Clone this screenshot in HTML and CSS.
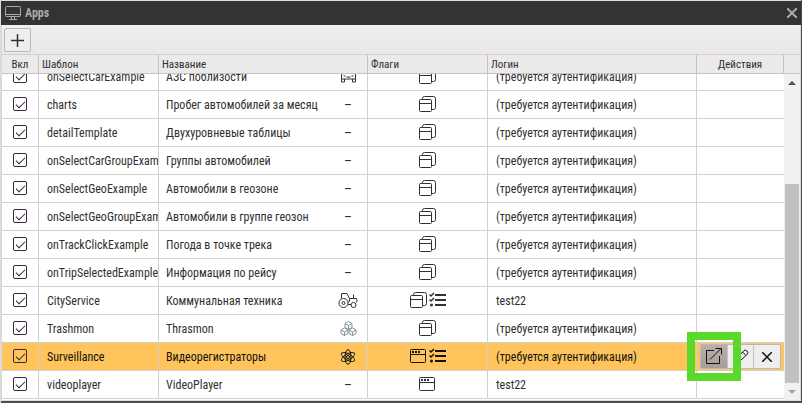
FILE: index.html
```html
<!DOCTYPE html>
<html lang="ru">
<head>
<meta charset="utf-8">
<title>Apps</title>
<link rel="stylesheet" href="styles.css">
</head>
<body>
<svg class="sprite" aria-hidden="true">
  <symbol id="i-windows" viewBox="0 0 17 17"><path d="M3.500 3.500V2.500Q3.500.5 5.500.5h9Q16.500.5 16.500 2.500v9q0 2-2 2H13M1.500 3.500h10q1 0 1 1v10q0 1-1 1h-10q-1 0-1-1v-10q0-1 1-1zM.5 7.500h12"/></symbol>
  <symbol id="i-window" viewBox="0 0 17 17"><path d="M1.500 1.500h13q1 0 1 1v11q0 1-1 1h-13q-1 0-1-1v-11q0-1 1-1zM.5 6.500h15"/><path d="M2 4h2M5 4h2M8 4h2" stroke-width="2"/></symbol>
  <symbol id="i-list" viewBox="0 0 17 17"><path stroke-width="2" d="M6 3h11M6 8h11M6 13h11"/><path stroke-width="1.500" d="M.5 2.500L2 4l3-3M.5 7.500L2 9l3-3"/><circle cx="2.500" cy="13" r="1.500" fill="currentColor" stroke="none"/></symbol>
  <symbol id="i-car" viewBox="0 0 17 16"><path d="M0 4.500h2.500L4.500.5h8l2 4H17M2.500 4.500h12l1 2v4h-14v-4zM1.500 10.500v3h3v-3M12.500 10.500v3h3v-3M3.500 7.500h2M11.500 7.500h2M6.500 8.500h4"/></symbol>
  <symbol id="i-tractor" viewBox="0 0 20 17"><circle cx="5.500" cy="11" r="4.500"/><circle cx="5.500" cy="11" r="1.500"/><circle cx="15.500" cy="13" r="2.500"/><path d="M3.500 6.500v-5h5.500l2.500 5h7q1 2 0 4M11.500 6.500v3l-1.500 1M10 12.500h3M15.500 6.500v-4"/></symbol>
  <symbol id="i-cubes" viewBox="0 0 17 15"><path d="M8.500.5l3.500 2v4l-3.500 2-3.500-2v-4zM5 2.500l3.500 2 3.500-2M8.500 4.500v4M4.500 7L8 9v3.500l-3.500 2-3.500-2V9zM1 9l3.500 2L8 9M4.500 11v3.500M12.500 7L16 9v3.500l-3.500 2-3.500-2V9zM9 9l3.500 2L16 9M12.500 11v3.500"/></symbol>
  <symbol id="i-atom" viewBox="0 0 16 16"><ellipse cx="8" cy="8" rx="3" ry="7.300"/><ellipse cx="8" cy="8" rx="3" ry="7.300" transform="rotate(60 8 8)"/><ellipse cx="8" cy="8" rx="3" ry="7.300" transform="rotate(-60 8 8)"/><circle cx="8" cy="8" r="1.500"/></symbol>
</svg>
<main class="window">
  <header class="titlebar">
    <svg class="monitor" viewBox="0 0 16 14" aria-hidden="true"><path d="M1.500.5h13q1 0 1 1v8q0 1-1 1h-13q-1 0-1-1v-8q0-1 1-1zM.5 8.500h15M6.500 10.500v2.500M9.500 10.500v2.500M4 13.500h8"/></svg>
    <h1>Apps</h1>
    <button class="close" aria-label="Закрыть"><svg viewBox="0 0 10 10"><path d="M0 0l10 10M10 0L0 10"/></svg></button>
  </header>
  <div class="content">
    <div class="toolbar"><button class="add" aria-label="Добавить"><svg viewBox="0 0 13 13"><path d="M6.500 0v13M0 6.500h13"/></svg></button></div>
    <table class="grid head">
      <colgroup><col class="c-on"><col class="c-tpl"><col><col class="c-flags"><col><col class="c-act"><col class="c-bar"></colgroup>
      <thead><tr><th class="mid">Вкл</th><th>Шаблон</th><th>Название</th><th>Флаги</th><th>Логин</th><th class="mid">Действия</th><th></th></tr></thead>
    </table>
    <div class="body">
      <div class="rows">
        <table class="grid">
          <colgroup><col class="c-on"><col class="c-tpl"><col><col class="c-flags"><col><col class="c-act"></colgroup>
          <tbody>
            <tr><td class="mid"><input type="checkbox" checked aria-label="onSelectCarExample"></td><td>onSelectCarExample</td><td class="icons"><div class="name"><span>АЗС поблизости</span><span class="kind"><svg class="i17"><use href="#i-car"/></svg></span></div></td><td class="icons"><div class="flags"><svg class="i17"><use href="#i-windows"/></svg></div></td><td>(требуется аутентификация)</td><td></td></tr>
            <tr><td class="mid"><input type="checkbox" checked aria-label="charts"></td><td>charts</td><td class="icons"><div class="name"><span>Пробег автомобилей за месяц</span><span class="kind">–</span></div></td><td class="icons"><div class="flags"><svg class="i17"><use href="#i-windows"/></svg></div></td><td>(требуется аутентификация)</td><td></td></tr>
            <tr><td class="mid"><input type="checkbox" checked aria-label="detailTemplate"></td><td>detailTemplate</td><td class="icons"><div class="name"><span>Двухуровневые таблицы</span><span class="kind">–</span></div></td><td class="icons"><div class="flags"><svg class="i17"><use href="#i-windows"/></svg></div></td><td>(требуется аутентификация)</td><td></td></tr>
            <tr><td class="mid"><input type="checkbox" checked aria-label="onSelectCarGroupExample"></td><td>onSelectCarGroupExample</td><td class="icons"><div class="name"><span>Группы автомобилей</span><span class="kind">–</span></div></td><td class="icons"><div class="flags"><svg class="i17"><use href="#i-windows"/></svg></div></td><td>(требуется аутентификация)</td><td></td></tr>
            <tr><td class="mid"><input type="checkbox" checked aria-label="onSelectGeoExample"></td><td>onSelectGeoExample</td><td class="icons"><div class="name"><span>Автомобили в геозоне</span><span class="kind">–</span></div></td><td class="icons"><div class="flags"><svg class="i17"><use href="#i-windows"/></svg></div></td><td>(требуется аутентификация)</td><td></td></tr>
            <tr><td class="mid"><input type="checkbox" checked aria-label="onSelectGeoGroupExample"></td><td>onSelectGeoGroupExample</td><td class="icons"><div class="name"><span>Автомобили в группе геозон</span><span class="kind">–</span></div></td><td class="icons"><div class="flags"><svg class="i17"><use href="#i-windows"/></svg></div></td><td>(требуется аутентификация)</td><td></td></tr>
            <tr><td class="mid"><input type="checkbox" checked aria-label="onTrackClickExample"></td><td>onTrackClickExample</td><td class="icons"><div class="name"><span>Погода в точке трека</span><span class="kind">–</span></div></td><td class="icons"><div class="flags"><svg class="i17"><use href="#i-windows"/></svg></div></td><td>(требуется аутентификация)</td><td></td></tr>
            <tr><td class="mid"><input type="checkbox" checked aria-label="onTripSelectedExample"></td><td>onTripSelectedExample</td><td class="icons"><div class="name"><span>Информация по рейсу</span><span class="kind">–</span></div></td><td class="icons"><div class="flags"><svg class="i17"><use href="#i-windows"/></svg></div></td><td>(требуется аутентификация)</td><td></td></tr>
            <tr><td class="mid"><input type="checkbox" checked aria-label="CityService"></td><td>CityService</td><td class="icons"><div class="name"><span>Коммунальная техника</span><span class="kind"><svg class="i20"><use href="#i-tractor"/></svg></span></div></td><td class="icons"><div class="flags"><svg class="i17"><use href="#i-windows"/></svg><svg class="i17"><use href="#i-list"/></svg></div></td><td>test22</td><td></td></tr>
            <tr><td class="mid"><input type="checkbox" checked aria-label="Trashmon"></td><td>Trashmon</td><td class="icons"><div class="name"><span>Thrasmon</span><span class="kind pale"><svg class="i17"><use href="#i-cubes"/></svg></span></div></td><td class="icons"><div class="flags"><svg class="i17"><use href="#i-windows"/></svg></div></td><td>(требуется аутентификация)</td><td></td></tr>
            <tr class="selected"><td class="mid"><input type="checkbox" checked aria-label="Surveillance"></td><td>Surveillance</td><td class="icons"><div class="name"><span>Видеорегистраторы</span><span class="kind"><svg class="i16"><use href="#i-atom"/></svg></span></div></td><td class="icons"><div class="flags"><svg class="i17"><use href="#i-window"/></svg><svg class="i17"><use href="#i-list"/></svg></div></td><td>(требуется аутентификация)</td>
              <td class="actions"><div class="group">
                <button class="open" aria-label="Открыть"><svg class="i17" viewBox="0 0 17 17"><path d="M9 2.500H1.500v13h13V8M5 11.500L16 .5M10.500.5H16.500V6.500"/></svg></button>
                <button aria-label="Изменить"><svg class="i16" viewBox="0 0 16 16"><path d="M1.500 14.500l1-4 8.500-9q1.500-1 3 .5t.5 3l-9 8.500zM9.500 3l3.500 3.500"/><path d="M.5 15.500l1-3.500 2.500 2.500z" fill="#f5c518" stroke="none"/></svg></button>
                <button aria-label="Удалить"><svg class="i10" viewBox="0 0 10 10"><path d="M0 0l10 10M10 0L0 10" stroke-width="1.500"/></svg></button>
                <span class="marker"></span>
              </div></td></tr>
            <tr><td class="mid"><input type="checkbox" checked aria-label="videoplayer"></td><td>videoplayer</td><td class="icons"><div class="name"><span>VideoPlayer</span><span class="kind">–</span></div></td><td class="icons"><div class="flags"><svg class="i17"><use href="#i-window"/></svg></div></td><td>test22</td><td></td></tr>
          </tbody>
        </table>
      </div>
      <div class="scrollbar" aria-hidden="true"><i class="up"></i><i class="track"><i class="thumb"></i></i><i class="down"></i></div>
    </div>
  </div>
</main>
</body>
</html>
```
FILE: styles.css
```css
* { box-sizing: border-box; }
body {
  display: flex;
  height: 100vh;
  margin: 0;
  padding: 1px 1px 2px;
  background: linear-gradient(90deg, #dcdcdc 50%, #4a4849 50%);
  color: #303030;
  font: 12px/16px "Roboto Condensed", "Liberation Sans Narrow", Roboto, sans-serif;
  overflow: hidden;
}
button { padding: 0; font: inherit; color: inherit; }
svg { display: block; flex: none; fill: none; stroke: currentColor; }
.sprite { position: absolute; width: 0; height: 0; }
.i10 { width: 10px; height: 10px; }
.i16 { width: 16px; height: 16px; }
.i17 { width: 17px; height: 17px; }
.i20 { width: 20px; height: 17px; }

.window { display: flex; flex: 1; flex-direction: column; min-width: 0; box-shadow: 0 2px 0 #4f4d4e, 0 -1px 0 #dcdcdc; }
.titlebar { display: flex; flex: none; align-items: center; gap: 4px; height: 24px; padding: 0 4px; background: #333; color: #aaa; }
.titlebar h1 { flex: 1; margin: 0; font-size: 12px; font-weight: 700; }
.monitor { width: 16px; height: 14px; }
.close { display: flex; border: 0; background: none; }
.close svg { width: 10px; height: 10px; stroke-width: 2; }

.content { display: flex; flex: 1; flex-direction: column; min-height: 0; border: solid #d8d8d8; border-width: 0 1px 1px; background: #fff; }
.toolbar { flex: none; height: 30px; padding: 3px 2px; border-bottom: 1px solid #d0d0d0; background: linear-gradient(#f0eeef, #e9e7e8); }
.add { display: grid; place-items: center; width: 27px; height: 24px; border: 1px solid #b8b8b8; border-radius: 2px; background: #efedee; }
.add svg { width: 13px; height: 13px; stroke-width: 1.500; }

.grid { width: 100%; table-layout: fixed; border-collapse: separate; border-spacing: 0; }
.c-on { width: 37px; }
.c-tpl, .c-flags { width: 120px; }
.c-act { width: 87px; }
.c-bar { width: 16px; }
th { height: 19px; padding: 1px 3px 0; border: solid #c4c4c4; border-width: 0 1px 1px 0; background: #ebe9ea; text-align: left; font-size: 11px; font-weight: 400; }
th:last-child { border-right: 0; }
td { height: 28px; padding: 1px 0 0 8px; border: solid #d0d0d0; border-width: 0 1px 1px 0; background: #fff; white-space: nowrap; overflow: hidden; }
.rows td:last-child { border-right: 0; }
th.mid { padding: 1px 0 0; text-align: center; }
td.mid { padding: 0 0 1px; }
td.icons { padding: 0 0 0 7px; }
.selected td { background: #ffc55c; color: #111; }

input[type="checkbox"] { appearance: none; display: grid; place-items: center; width: 14px; height: 14px; margin: 0 auto; border: 1px solid #3c2440; border-radius: 2px; }
input[type="checkbox"]::before { content: ""; width: 8px; height: 4px; margin-bottom: 2px; border: solid #303030; border-width: 0 0 1px 1px; transform: rotate(-45deg); }

.name { display: flex; align-items: center; justify-content: space-between; }
.kind { display: flex; justify-content: center; width: 38px; font-size: 14px; }
.pale { color: #84929b; }
.flags { display: flex; justify-content: center; gap: 2px; padding-right: 7px; }

.body { display: flex; flex: 1; min-height: 0; }
.rows { display: flex; flex: 1; flex-direction: column; justify-content: flex-end; min-width: 0; padding-bottom: 1px; overflow: hidden; }

.rows td.actions { padding: 0 3px; overflow: visible; }
.group { position: relative; display: flex; height: 25px; border: 1px solid #b8b8b8; border-radius: 2px; background: #efedee; }
.group button { display: grid; flex: 1; place-items: center; border: 0; border-right: 1px solid #c4c4c4; background: none; }
.group button:last-of-type { border-right: 0; }
.group .open { background: linear-gradient(#b9aeaa, #a89d99); }
.marker { position: absolute; top: -13px; left: -14px; width: 54px; height: 49px; border: 8px solid #5bd92b; pointer-events: none; }

.scrollbar { display: flex; flex: none; flex-direction: column; width: 16px; padding: 0 1px; background: #f1f1f1; }
.up, .down { display: grid; place-items: center; height: 17px; }
.up::before, .down::before { content: ""; border: 4px solid transparent; border-top-width: 0; border-bottom: 4px solid #505050; }
.down::before { border-top: 4px solid #a3a3a3; border-bottom-width: 0; }
.track { display: flex; flex: 1; flex-direction: column; justify-content: flex-end; }
.thumb { height: 68%; background: #c1c1c1; }
```
